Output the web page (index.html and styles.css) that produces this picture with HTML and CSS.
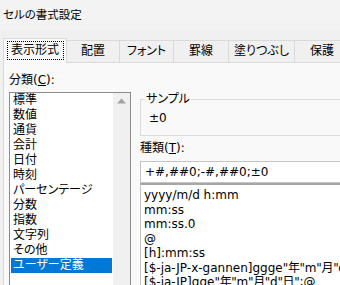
FILE: index.html
```html
<!DOCTYPE html>
<html lang="ja">
<head>
<meta charset="utf-8">
<link rel="stylesheet" href="styles.css">
</head>
<body>
<div class="window">
  <div class="titlebar">セルの書式設定</div>
  <div class="tabs">
    <div class="tab active"><span class="focus">表示形式</span></div>
    <div class="tab t-haichi">配置</div>
    <div class="tab t-font">フォント</div>
    <div class="tab t-kei">罫線</div>
    <div class="tab t-nuri">塗りつぶし</div>
    <div class="tab t-hogo">保護</div>
  </div>
  <div class="panel">
    <div class="left">
      <div class="label">分類(<u>C</u>):</div>
      <div class="listbox">
        <ul class="items">
          <li>標準</li>
          <li>数値</li>
          <li>通貨</li>
          <li>会計</li>
          <li>日付</li>
          <li>時刻</li>
          <li>パーセンテージ</li>
          <li>分数</li>
          <li>指数</li>
          <li>文字列</li>
          <li>その他</li>
          <li class="selected">ユーザー定義</li>
        </ul>
        <div class="scrollbar">
          <div class="arrow">
            <svg width="9" height="6" viewBox="0 0 9 6"><path d="M0 5.5 L4.5 0.5 L9 5.5 Z" fill="#a3a3a3"/></svg>
          </div>
        </div>
      </div>
    </div>
    <div class="right">
      <fieldset class="sample">
        <legend>サンプル</legend>
        <div class="sample-value">±0</div>
      </fieldset>
      <div class="label">種類(<u>T</u>):</div>
      <div class="input">+#,##0;-#,##0;±0</div>
      <ul class="formats">
        <li>yyyy/m/d h:mm</li>
        <li>mm:ss</li>
        <li>mm:ss.0</li>
        <li>@</li>
        <li>[h]:mm:ss</li>
        <li>[$-ja-JP-x-gannen]ggge<span class="cjk">"年"m"月"d"日"</span>;@</li>
        <li>[$-ja-JP]gge<span class="cjk">"年"m"月"d"日"</span>;@</li>
      </ul>
    </div>
  </div>
</div>
</body>
</html>
```
FILE: styles.css
```css
html, body {
  margin: 0;
  padding: 0;
}
body {
  width: 340px;
  height: 285px;
  overflow: hidden;
  background: #f0f0f0;
  font-family: "DejaVu Sans", "Noto Sans CJK JP", sans-serif;
  font-size: 12px;
  font-feature-settings: "palt";
  color: #000;
}
.window {
  width: 340px;
  height: 285px;
  overflow: hidden;
  display: flex;
  flex-direction: column;
}
.titlebar {
  height: 30px;
  line-height: 30px;
  padding-left: 3px;
  background: #f3f3f3;
  font-size: 11.5px;
  flex: none;
}
.tabs {
  display: flex;
  align-items: flex-end;
  height: 32px;
  padding-left: 3px;
  flex: none;
  white-space: nowrap;
}
.tab {
  height: 21px;
  line-height: 21px;
  box-sizing: content-box;
  border-top: 1px solid #d9d9d9;
  border-right: 1px solid #d9d9d9;
  text-align: center;
  background: #f0f0f0;
  flex: none;
}
.tab.active {
  height: 24px;
  border-left: 1px solid #d9d9d9;
  background: #f9f9f9;
  width: 62px;
  margin-bottom: -1px;
  position: relative;
  z-index: 1;
  display: flex;
  justify-content: center;
  align-items: flex-start;
}
.focus {
  display: block;
  margin-top: 2px;
  width: 55px;
  height: 17px;
  line-height: 17px;
  border: 1px dotted #000;
}
.t-haichi { width: 52px; }
.t-font { width: 53px; }
.t-kei { width: 54px; }
.t-nuri { width: 65px; }
.t-hogo { width: 54px; }

.panel {
  flex: 1;
  margin-left: 3px;
  border-top: 1px solid #d9d9d9;
  border-left: 1px solid #d9d9d9;
  background: #f9f9f9;
  display: flex;
  align-items: flex-start;
  padding-left: 5px;
  padding-top: 10px;
}
.label {
  height: 15px;
  line-height: 15px;
}
.left {
  width: 122px;
  flex: none;
}
.listbox {
  margin-top: 4px;
  height: 200px;
  border: 1px solid #8c8c8c;
  background: #fff;
  display: flex;
}
.items {
  list-style: none;
  margin: 0;
  padding: 0;
  flex: 1;
}
.items li {
  height: 15px;
  line-height: 15px;
  margin: 0 1px;
  padding-left: 2px;
  white-space: nowrap;
}
.items li.selected {
  background: #0078d7;
  color: #fff;
}
.scrollbar {
  width: 17px;
  background: #f0f0f0;
  flex: none;
}
.arrow {
  height: 17px;
  display: flex;
  align-items: center;
  justify-content: center;
}
.arrow svg {
  display: block;
  margin-top: -1px;
}
.right {
  margin-left: 9px;
  margin-top: 19px;
  width: 260px;
  flex: none;
}
.sample {
  margin: 0;
  padding: 0 0 9px 4px;
  border: 1px solid #dcdcdc;
  min-width: 0;
}
.sample legend {
  padding: 0 1px;
  line-height: 15px;
}
.sample-value {
  margin-top: 4px;
  padding-left: 4px;
  line-height: 15px;
}
.right .label {
  margin-top: 5px;
}
.input {
  margin-top: 5px;
  height: 20px;
  line-height: 20px;
  border: 1px solid #c4c4c4;
  background: #fff;
  padding-left: 4px;
  white-space: nowrap;
}
.formats {
  list-style: none;
  margin: 0;
  padding: 3px 0 0 3px;
  height: 200px;
  background: #fff;
  border-top: 2px solid #a6a6a6;
  border-left: 1px solid #c4c4c4;
}
.formats li {
  height: 14.5px;
  line-height: 14.5px;
  white-space: nowrap;
}
.cjk {
  letter-spacing: -0.3px;
}
```
